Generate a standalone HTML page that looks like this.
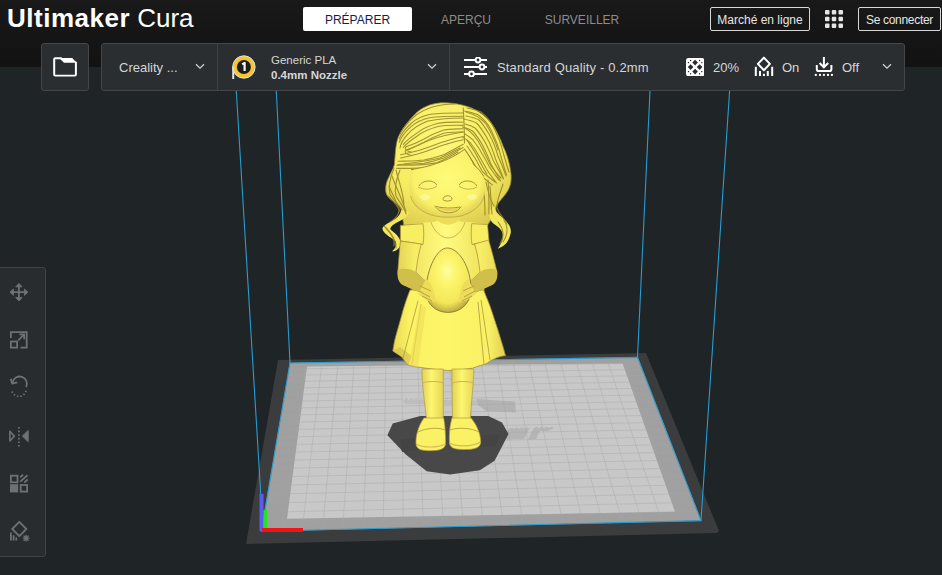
<!DOCTYPE html>
<html><head><meta charset="utf-8">
<style>
*{margin:0;padding:0;box-sizing:border-box}
html,body{width:942px;height:575px;overflow:hidden;background:#1f2427;font-family:"Liberation Sans",sans-serif}
.abs{position:absolute}
#hdr{left:0;top:0;width:942px;height:67px;background:linear-gradient(#191919,#121212)}
#title{left:7px;top:3px;font-size:26px;color:#fff;white-space:nowrap}
#title b{font-weight:bold;letter-spacing:0.5px}
.tab{top:7px;height:24px;font-size:12px;line-height:26px;text-align:center;color:#8c8c8c}
#t1{left:303px;width:109px;background:#fff;color:#1b1b4a;border-radius:2px}
.obtn{top:7px;height:24px;border:1px solid #d8d8d8;border-radius:2px;color:#e6e6e6;font-size:12px;line-height:24px;text-align:center}
.bar{background:#2a2e31;border:1px solid #43474a;border-radius:3px}
.txt{color:#d6d6d6;font-size:13px;white-space:nowrap;margin-top:1px}
.div{width:1px;background:#3d4144}
#ltb{left:-4px;top:267px;width:50px;height:290px;background:#282c2f;border:1px solid #3f4346;border-radius:3px}
</style></head><body>
<svg class="abs" style="left:0;top:0" width="942" height="575" viewBox="0 0 942 575">
 <!-- slab -->
 <polygon points="278,360 646,353 719,531 717,533 246,544" fill="#3a3c3e"/>
 <polygon points="290,363 637.5,357.4 701,520.6 261.4,531.2" fill="#a0a0a0"/>
 <polygon points="307,366.5 622.6,363.5 675,511.7 287,518.7" fill="#c8c8c8"/>
 <path d="M290.0 363.0L261.4 531.2M290.0 363.0L637.5 357.4M306.0 362.7L281.8 530.7M289.0 369.1L639.8 363.3M322.1 362.5L302.1 530.2M287.9 375.3L642.2 369.4M338.1 362.2L322.5 529.7M286.8 381.6L644.6 375.5M354.1 362.0L342.7 529.2M285.7 388.1L647.0 381.8M370.0 361.7L363.0 528.8M284.6 394.6L649.5 388.2M385.9 361.5L383.1 528.3M283.5 401.4L652.0 394.8M401.8 361.2L403.3 527.8M282.3 408.2L654.6 401.4M417.7 360.9L423.4 527.3M281.1 415.2L657.3 408.2M433.6 360.7L443.5 526.8M279.9 422.4L660.0 415.2M449.4 360.4L463.5 526.3M278.7 429.7L662.7 422.3M465.2 360.2L483.5 525.8M277.4 437.1L665.6 429.5M481.0 359.9L503.5 525.4M276.1 444.8L668.4 436.9M496.7 359.7L523.4 524.9M274.8 452.5L671.4 444.5M512.5 359.4L543.3 524.4M273.4 460.5L674.4 452.2M528.2 359.2L563.1 523.9M272.0 468.6L677.4 460.1M543.9 358.9L582.9 523.4M270.6 477.0L680.6 468.1M559.5 358.7L602.7 523.0M269.2 485.5L683.8 476.4M575.2 358.4L622.4 522.5M267.7 494.2L687.1 484.8M590.8 358.2L642.1 522.0M266.2 503.1L690.4 493.5M606.4 357.9L661.8 521.5M264.6 512.3L693.9 502.3M622.0 357.7L681.4 521.1M263.0 521.6L697.4 511.3M637.5 357.4L701.0 520.6M261.4 531.2L701.0 520.6" stroke="#a6a6a6" stroke-width="0.7" fill="none" opacity="0.6"/>
 <polygon points="290,363 637.5,357.4 701,520.6 261.4,531.2" fill="none" stroke="#2a9ccf" stroke-width="1.1"/>
 <!-- volume lines -->
 <path d="M236.3 91L263 531.2M276.3 91L290 363M650 91L637.5 357.4M729.6 91L701 520.6" stroke="#2a9ccf" stroke-width="1.1" fill="none"/>
 <!-- logo -->
 <g opacity="0.6">
  <path d="M403 399.5L476 400.5L478 405L405 404Z" fill="#b6b6b6"/>
  <path d="M403 399L470 399.5" stroke="#dadada" stroke-width="0.8" stroke-dasharray="2 3"/>
  <path d="M476 399L515 401.5L516 412.5L486 411L478 405Z" fill="#a6a6a6"/>
  <path d="M508 428L530 427.5L524 439L505 439.5Z M534 427L556 427L548 431L540 431L536 439L528 439.5Z" fill="#a9a9a9"/>
  <path d="M503 428.5L556 427" stroke="#d4d4d4" stroke-width="0.8" stroke-dasharray="2 3"/>
 </g>
 <!-- shadow -->
 <polygon points="387.4,435.2 392.7,423.5 420.3,416.1 488.3,416.1 502,422.5 508.5,434.1 494.6,460.7 479.8,470.2 450,474.5 426.7,471.3 405.5,454.3" fill="#484848"/>
 <path d="M400 440L430 436L432 448L402 452Z M470 436L500 434L496 446L468 448Z" fill="#444444"/>
 <!-- axes -->
 <rect x="259.5" y="494" width="4" height="37" fill="#5a5cf0"/>
 <rect x="263.5" y="510" width="3.5" height="21" fill="#1ee61e"/>
 <rect x="262" y="528" width="41" height="4" fill="#f01414"/>
 <defs>
 <radialGradient id="gHair" cx="0.45" cy="0.3" r="0.75">
  <stop offset="0" stop-color="#fdf77a"/><stop offset="0.6" stop-color="#f6ec62"/><stop offset="1" stop-color="#d8c64c"/>
 </radialGradient>
 <radialGradient id="gFace" cx="0.5" cy="0.42" r="0.62">
  <stop offset="0" stop-color="#fffb78"/><stop offset="0.72" stop-color="#faf168"/><stop offset="1" stop-color="#dccb52"/>
 </radialGradient>
 <linearGradient id="gSkirt" x1="0" y1="0" x2="1" y2="0">
  <stop offset="0" stop-color="#e9d852"/><stop offset="0.15" stop-color="#fbf264"/><stop offset="0.5" stop-color="#fdf668"/><stop offset="0.85" stop-color="#faf064"/><stop offset="1" stop-color="#e2cf50"/>
 </linearGradient>
 <linearGradient id="gBod" x1="0" y1="0" x2="1" y2="0">
  <stop offset="0" stop-color="#eedf58"/><stop offset="0.5" stop-color="#fffb80"/><stop offset="1" stop-color="#eedf58"/>
 </linearGradient>
 <radialGradient id="gEgg" cx="0.47" cy="0.36" r="0.64">
  <stop offset="0" stop-color="#fffca8"/><stop offset="0.3" stop-color="#fdf66c"/><stop offset="0.78" stop-color="#f4e65a"/><stop offset="1" stop-color="#bfae40"/>
 </radialGradient>
 <linearGradient id="gLeg" x1="0" y1="0" x2="1" y2="0">
  <stop offset="0" stop-color="#e2d154"/><stop offset="0.45" stop-color="#fdf670"/><stop offset="1" stop-color="#e6d558"/>
 </linearGradient>
 <linearGradient id="gArm" x1="0" y1="0" x2="1" y2="0">
  <stop offset="0" stop-color="#e4d356"/><stop offset="0.5" stop-color="#f8ef66"/><stop offset="1" stop-color="#eadb5a"/>
 </linearGradient>
</defs>
<g id="fig" stroke-linejoin="round">
 <!-- hair mass -->
 <path d="M441.3 102.8C430 103.5 421 108 415.2 114.1C409 120 401 130 397.8 138.5C395.5 145 395 158 394.4 164.6C393 170 390 174 389 177C386.5 181 385.5 186 385.7 190C385.7 196 390 199 393.5 201.3C398 205 401.5 208 401.3 211L404 226L424 232L472 232L487 226L492 218L496 212C496 210 495.5 209 496 207C498 202 503 198 507 192C511 186 511.5 180 511 174C510 164 507 154 503 146C500 138 497 132 494 127C488 118 479 110 467.4 106.5C460 104 450 102.5 441.3 102.8Z" fill="url(#gHair)" stroke="#9a8638" stroke-width="0.8"/>
 <path d="M401.3 209C401 215 396 219 390 222C385 225 382 227 382.5 229C383 233 390 237 395 240.5C397 243 397 247 392 251.5C397 251 400 248 400.5 244C401 238 396 234 391 230C389 228 392 225 398 222C404 219 408 216 409 212Z" fill="#f2e75e"/>
 <path d="M494 206C495 211 498 214 503 218C507 222 511 226 510.9 232C509 242 505 246 497.8 248.7C501 244 503 240 503 236C503 231 499 227 494 224C490 221 489 216 489 210Z" fill="#f2e75e"/>
 <!-- hair strands -->
 <g fill="none" stroke="#948426" stroke-width="1.1" opacity="0.85" stroke-linecap="round">
  <path d="M463.2 113C450 113 440 113 430.6 114.3C422 116 416 119 411 123.5C405 129 401 134 399.3 139"/>
  <path d="M463.2 122.2C455 122 445 122 437.2 123.5C428 126 422 129 417.6 132.6C411 137 406 141 403.3 144.3"/>
  <path d="M463.2 128.7C455 129 449 129 443.7 130C435 133 429 136 424.1 139C417 143 410 145 405.9 147C404 149 406 151 411 152"/>
  <path d="M463.2 136.5C455 138 447 141 439.8 143C432 146 424 149 417.6 150.8C410 152.5 404 154 400.6 154.8"/>
  <path d="M463.2 144.3C455 149 449 152 443.7 154.8C437 157 430 159 424.1 160C415 161 405 161 398 161.3"/>
  <path d="M458 152C451 156 444 160 437.2 162.6C428 164.5 418 165 411 165.2C405 165.2 400 165.2 396.7 165.2"/>
  <path d="M463.2 107.8C464 120 464.5 132 464.5 143"/>
  <path d="M467 108C472 109 477 110 481 112C486 116 490 120 493 126C497 134 501 143 503 152C505 159 507 166 509 172"/>
  <path d="M466 116C471 117 475 118 479 120C483 124 486 129 489 134C493 141 496 149 498 156C501 163 504 170 506 176"/>
  <path d="M465 124C469 125 472 126 475 128C479 132 482 137 485 142C488 148 491 154 493 160C496 166 500 172 503 178"/>
  <path d="M465 134C468 136 471 138 473 140C476 144 479 148 481 152C484 157 487 162 489 166C492 171 496 176 499 180"/>
  <path d="M467 146C470 150 472 154 475 158C478 163 480 168 483 172C487 176 491 179 495 182"/>
  <path d="M455 104C440 104 425 108 415 116C408 122 403 128 400 134"/>
  <path d="M463 118C450 118 438 119 428 121C420 124 413 128 408 134C404 138 401 142 400 148"/>
  <path d="M463 132C450 134 438 137 430 140C422 143 414 147 408 150"/>
  <path d="M460 148C452 152 446 155 440 158C432 160 420 162 404 164"/>
  <path d="M466 112C474 114 481 118 486 124C491 132 495 140 498 150"/>
  <path d="M465 128C472 132 478 140 482 148C485 154 488 160 491 166C494 170 497 174 501 178"/>
  <path d="M467 140C470 145 474 150 477 156C480 162 483 168 487 174"/>
  <path d="M488 180C489 192 489 204 489 214"/>
  <path d="M396 170C399 182 403 192 404 204"/>
  <path d="M394 168C390 178 388 186 390 194C393 200 399 204 402 210"/>
  <path d="M400 170C396 180 394 188 396 196C399 202 404 206 406 214"/>
  <path d="M388 196C392 200 397 204 399 210C399 215 395 219 390 222"/>
  <path d="M384 226C390 232 395 238 394 246"/>
  <path d="M486 182C488 192 490 200 494 206"/>
  <path d="M503 184C500 194 496 202 497 208C499 214 504 218 507 224"/>
  <path d="M498 222C503 228 505 236 500 244"/>
  <path d="M483 176C484 190 485 202 485 215"/>
  <path d="M490 186C491 196 491 206 492 214"/>
  <path d="M392 176C396 188 402 198 406 212"/>
  <path d="M389 186C393 196 398 204 400 212"/>
  <path d="M386 228C392 234 396 240 396 248"/>
  <path d="M504 220C508 226 508 234 503 242"/>
  <path d="M 463.2 116.2 C 450.0 116.2 440.0 116.2 430.6 117.5 C 422.0 119.2 416.0 122.2 411.0 126.7 C 405.0 132.2 401.0 137.2 399.3 142.2"/>
  <path d="M 463.2 125.4 C 455.0 125.2 445.0 125.2 437.2 126.7 C 428.0 129.2 422.0 132.2 417.6 135.8 C 411.0 140.2 406.0 144.2 403.3 147.5"/>
  <path d="M 463.2 131.9 C 455.0 132.2 449.0 132.2 443.7 133.2 C 435.0 136.2 429.0 139.2 424.1 142.2 C 417.0 146.2 410.0 148.2 405.9 150.2 C 404.0 152.2 406.0 154.2 411.0 155.2"/>
  <path d="M 463.2 139.7 C 455.0 141.2 447.0 144.2 439.8 146.2 C 432.0 149.2 424.0 152.2 417.6 154.0 C 410.0 155.7 404.0 157.2 400.6 158.0"/>
  <path d="M 463.2 147.5 C 455.0 152.2 449.0 155.2 443.7 158.0 C 437.0 160.2 430.0 162.2 424.1 163.2 C 415.0 164.2 405.0 164.2 398.0 164.5"/>
  <path d="M 458.0 155.2 C 451.0 159.2 444.0 163.2 437.2 165.8 C 428.0 167.7 418.0 168.2 411.0 168.4 C 405.0 168.4 400.0 168.4 396.7 168.4"/>
  <path d="M 464.5 111.0 C 469.5 112.0 474.5 113.0 478.5 115.0 C 483.5 119.0 487.5 123.0 490.5 129.0 C 494.5 137.0 498.5 146.0 500.5 155.0 C 502.5 162.0 504.5 169.0 506.5 175.0"/>
  <path d="M 463.5 119.0 C 468.5 120.0 472.5 121.0 476.5 123.0 C 480.5 127.0 483.5 132.0 486.5 137.0 C 490.5 144.0 493.5 152.0 495.5 159.0 C 498.5 166.0 501.5 173.0 503.5 179.0"/>
  <path d="M 462.5 127.0 C 466.5 128.0 469.5 129.0 472.5 131.0 C 476.5 135.0 479.5 140.0 482.5 145.0 C 485.5 151.0 488.5 157.0 490.5 163.0 C 493.5 169.0 497.5 175.0 500.5 181.0"/>
  <path d="M 462.5 137.0 C 465.5 139.0 468.5 141.0 470.5 143.0 C 473.5 147.0 476.5 151.0 478.5 155.0 C 481.5 160.0 484.5 165.0 486.5 169.0 C 489.5 174.0 493.5 179.0 496.5 183.0"/>
  <path d="M 464.5 149.0 C 467.5 153.0 469.5 157.0 472.5 161.0 C 475.5 166.0 477.5 171.0 480.5 175.0 C 484.5 179.0 488.5 182.0 492.5 185.0"/>
 </g>
 <!-- neck -->
 <path d="M436 210H460V230H436Z" fill="#ecdc58"/>
 <!-- face -->
 <path d="M411.3 169.7C409 178 408.5 188 410.5 196C413 205 420 211 430 214.5C436 216.5 442 217.2 448 217.2C455 217.2 462 216.5 468 213.5C477 209 482.5 203 484.5 195C486 187 485 181 483.2 176C479 170 475 166 472.3 163.5C470 158 467 152 464.5 149.4C455 156 446 161 436.3 163.5C428 166 418 168 411.3 169.7Z" fill="url(#gFace)"/>
 <path d="M411 169.7C420 168 430 166 436.3 163.5C448 160 458 154 464.5 149.4C468 154 472 160 474 165C478 168 481 172 483.5 176" fill="none" stroke="#9b8738" stroke-width="1"/>
 <path d="M410.5 196C413 205 420 211 430 214.5C436 216.5 442 217.2 448 217.2C455 217.2 462 216.5 468 213.5C477 209 482.5 203 484.5 195" fill="none" stroke="#a8923c" stroke-width="0.8" opacity="0.7"/>
 <!-- face features -->
 <g fill="none" stroke="#a8933e" stroke-width="1">
  <path d="M419 186C422 180 433 179 437 185"/>
  <path d="M418 187C424 190 432 190 437 186" stroke="#c8b350"/>
  <path d="M459 185C463 179 474 180 477 186"/>
  <path d="M459 186C464 190 472 190 477 187" stroke="#c8b350"/>
  <path d="M443 199.5C443 194.5 452.5 194.5 452 199.5C450.5 201.5 444.5 201.5 443 199.5Z"/>
  <path d="M434.7 205.7C440 215 456 215 461.3 206.5"/>
  <path d="M436 206.5C444 208.5 452 208.5 460 207"/>
 </g>
 <path d="M437 207.5C444 209 452 209 459 208C456 212 440 212 437 207.5Z" fill="#e4d150"/>
 <ellipse cx="425" cy="197" rx="5" ry="3" fill="#fffcb0" opacity="0.6"/>
 <ellipse cx="472" cy="197" rx="5" ry="3" fill="#fffcb0" opacity="0.6"/>
 <!-- bodice -->
 <path d="M404 226C415 223 430 222 438 221C444 226 452 226 458 221C468 222 480 223 487.5 224.5L486 250L484 296L412 296L410 250Z" fill="url(#gBod)"/>
 <path d="M431 222C434 232 442 238 448 238C455 238 462 232 465 222" fill="none" stroke="#c3ad4c" stroke-width="0.9"/>
 <!-- sleeves -->
 <path d="M400.4 225.4L423 223.7C424 230 424 238 423 244.6L400.4 241Z" fill="#f8ee62" stroke="#a08c3a" stroke-width="0.7"/>
 <path d="M471.7 223.7L487.5 224.5L489 241L472 244.6C471 238 471 230 471.7 223.7Z" fill="#f8ee62" stroke="#a08c3a" stroke-width="0.7"/>
 <path d="M401 241L423 244.6M472 244.6L489 241" stroke="#b8a246" stroke-width="0.8" fill="none"/>
 <!-- skirt -->
 <path d="M410 290C406 300 403 310 402.2 313.5C399 325 396 335 394.4 341.6L392.8 351C396 353 399 355 402.2 357.3C404 360 406 363 408.5 365C416 367 424 368 432 369C440 370 446 370.6 452.3 370.6C460 370 466 369 472.6 368.2C478 366 483 365 486.7 363.5C490 361 492 360 494.5 358.8C498 357 502 356 505.5 355.7C503 346 500 337 497.6 329C494 318 490 305 486.7 297.8L483.6 290Z" fill="url(#gSkirt)" stroke="#a08c3a" stroke-width="0.8"/>
 <path d="M393 351C396 353 399 355 402 357C404 360 406 363 408.5 365L412 356L400 347Z" fill="#d4c24c" opacity="0.7"/>
 <!-- skirt folds -->
 <path d="M418 301L403 358M421 304L412 364M478 302L484 364M481 300L490 360" fill="none" stroke="#a9953e" stroke-width="0.9" opacity="0.85"/>
 <path d="M420 304L409 365L418 367L426 308Z" fill="#efe058" opacity="0.7"/>
 <!-- arms -->
 <path d="M400.4 241C399.5 250 398.5 262 397.8 272C397.5 277 398.5 281 401.5 284C405 286 410 288 419.6 292C424 295 428 299 432 302L434 294C432 290 430 286 428 283C424 280 420 276 416 272C417 262 419 252 421.3 244Z" fill="url(#gArm)" stroke="#a08c3a" stroke-width="0.7"/>
 <path d="M488.6 240C491 248 494.3 260 497 272C497.5 277 496.5 281 493.5 284C490 286 485 288 476 292C472 295 468 299 464 302L462 294C464 290 466 286 468 283C472 280 476 276 480 272C479 262 477 252 474.5 244Z" fill="url(#gArm)" stroke="#a08c3a" stroke-width="0.7"/>
 <path d="M397.8 270C402 268 410 268 416 272C420 276 424 280 428 283C430 286 432 290 434 294L432 302C428 299 424 295 419.6 292C410 288 405 286 401.5 284C398.5 281 397.5 277 397.8 270Z" fill="#d0bf4a"/>
 <path d="M497 270C493 268 485 268 480 272C476 276 472 280 468 283C466 286 464 290 462 294L464 302C468 299 472 295 476 292C485 288 490 286 493.5 284C496.5 281 497.5 277 497 270Z" fill="#d0bf4a"/>
 <!-- egg -->
 <path d="M447.4 248C437 248 427 268 426 290C425.5 303 435 312.4 448 312.4C461 312.4 471 303 471 289C471 268 459 248 447.4 248Z" fill="url(#gEgg)" stroke="#8a7734" stroke-width="0.9"/>
 <!-- hands -->
 <path d="M426 279C431 282 433 288 434 294L436 302L428 301L418 294Z" fill="#ecdc58"/>
 <path d="M468 279C463 282 461 288 460 294L458 302L466 301L476 294Z" fill="#ecdc58"/>
 <path d="M420 286L431 291M419 291L430 297M422 296L432 301M474 286L463 291M475 291L464 297M472 296L462 301" stroke="#a8923c" stroke-width="0.8" fill="none"/>
 <!-- legs -->
 <path d="M421.9 369H443.3L443.3 418C437 420 430 420 426.4 418C425 405 422 385 421.9 369Z" fill="url(#gLeg)" stroke="#b09a42" stroke-width="0.7"/>
 <path d="M451.9 369H473.9C473.5 385 471 405 470.5 418C466 420 458 420 452.4 418Z" fill="url(#gLeg)" stroke="#b09a42" stroke-width="0.7"/>
 <path d="M422 383C428 381 438 381 443.3 383M452 383C458 381 468 381 473.9 383" stroke="#c4ae4e" stroke-width="0.9" fill="none"/>
 <!-- shoes -->
 <path d="M424 418C418 426 415 438 416.2 445C417 450 423 450.7 431 450.7C440 450.7 445.6 449 445.6 443C445.6 434 445 424 443.6 418Z" fill="#faf164" stroke="#b09a42" stroke-width="0.7"/>
 <path d="M452 418C449.5 426 449 436 449.5 443C450 449 457 449.5 465 449.5C474 449.5 480.7 448 480.7 442C480.7 433 476 424 471 418Z" fill="#faf164" stroke="#b09a42" stroke-width="0.7"/>
 <path d="M418 432C426 428 438 427 445 430M450 430C458 427 472 428 479 432" stroke="#b49f44" stroke-width="0.9" fill="none"/>
 <path d="M416.5 444C422 448 438 448 445.5 444M449.5 443C456 447 472 447 480.7 442" stroke="#d3bc54" stroke-width="1.2" fill="none"/>
</g>

</svg>
<div id="hdr" class="abs"></div>
<div id="title" class="abs"><b>Ultimaker</b> Cura</div>
<div id="t1" class="abs tab">PRÉPARER</div>
<div class="abs tab" style="left:430px;width:72px">APERÇU</div>
<div class="abs tab" style="left:540px;width:84px">SURVEILLER</div>
<div class="abs obtn" style="left:710px;width:100px">Marché en ligne</div>
<svg class="abs" style="left:825px;top:10px" width="18" height="18" viewBox="0 0 18 18" fill="#e6e6e6">
 <rect x="0" y="0" width="4.5" height="4.5" rx="1"/><rect x="6.75" y="0" width="4.5" height="4.5" rx="1"/><rect x="13.5" y="0" width="4.5" height="4.5" rx="1"/>
 <rect x="0" y="6.75" width="4.5" height="4.5" rx="1"/><rect x="6.75" y="6.75" width="4.5" height="4.5" rx="1"/><rect x="13.5" y="6.75" width="4.5" height="4.5" rx="1"/>
 <rect x="0" y="13.5" width="4.5" height="4.5" rx="1"/><rect x="6.75" y="13.5" width="4.5" height="4.5" rx="1"/><rect x="13.5" y="13.5" width="4.5" height="4.5" rx="1"/>
</svg>
<div class="abs obtn" style="left:858px;width:83px;letter-spacing:-0.3px">Se connecter</div>

<div class="abs bar" style="left:41px;top:43px;width:48px;height:48px"></div>
<svg class="abs" style="left:50px;top:54px" width="30" height="26" viewBox="0 0 30 26">
 <path fill="#fff" fill-rule="evenodd" d="M5.2 3.2H11.3L12.3 4.1H22.2L24.7 6.8L26.9 8.1V20.6Q26.9 22.6 24.9 22.6H5.2Q3.2 22.6 3.2 20.6V5.2Q3.2 3.2 5.2 3.2Z M5.2 5.2H10.4L14 8.8H24.9V20.8H5.2Z"/>
</svg>

<div class="abs bar" style="left:101px;top:43px;width:804px;height:48px"></div>
<div class="abs div" style="left:217px;top:44px;height:46px"></div>
<div class="abs div" style="left:449px;top:44px;height:46px"></div>
<div class="abs txt" style="left:119px;top:59px">Creality ...</div>
<svg class="abs" style="left:195px;top:63px" width="10" height="7" viewBox="0 0 10 7"><path d="M1 1.2L5 5.2L9 1.2" stroke="#cfcfcf" stroke-width="1.3" fill="none"/></svg>
<svg class="abs" style="left:226px;top:50px" width="36" height="34" viewBox="0 0 36 34">
 <circle cx="17.9" cy="17" r="11.2" fill="#f3c52f" stroke="#e2e2e2" stroke-width="1"/>
 <circle cx="17.9" cy="17" r="7" fill="#1c1c1c"/>
 <path d="M7.2 17V29" stroke="#e2e2e2" stroke-width="2"/>
 <path d="M16.2 14.4L18.6 12.8V21" stroke="#f4f4f4" stroke-width="2.2" fill="none" stroke-linejoin="round"/>
</svg>
<div class="abs txt" style="left:271px;top:53px;font-size:11.5px">Generic PLA</div>
<div class="abs txt" style="left:271px;top:68px;font-size:11.5px;font-weight:bold">0.4mm Nozzle</div>
<svg class="abs" style="left:427px;top:63px" width="10" height="7" viewBox="0 0 10 7"><path d="M1 1.2L5 5.2L9 1.2" stroke="#cfcfcf" stroke-width="1.3" fill="none"/></svg>
<svg class="abs" style="left:463px;top:57px" width="26" height="20" viewBox="0 0 26 20" stroke="#fff" stroke-width="2" fill="#2a2e31">
 <path d="M1 3H24M1 10H24M1 17H24"/>
 <circle cx="15" cy="3" r="2.4"/><circle cx="19" cy="10" r="2.4"/><circle cx="8.5" cy="17" r="2.4"/>
</svg>
<div class="abs txt" style="left:497px;top:59px;letter-spacing:0.15px">Standard Quality - 0.2mm</div>
<svg class="abs" style="left:685.8px;top:57.8px" width="18.4" height="18.4" viewBox="0 0 18.4 18.4">
 <rect x="0" y="0" width="18.4" height="18.4" rx="2.6" fill="#fff"/>
 <g fill="#2a2e31"><path d="M9.1 1.7999999999999998L11.899999999999999 4.6L9.1 7.3999999999999995L6.3 4.6ZM4.6 6.3L7.3999999999999995 9.1L4.6 11.899999999999999L1.7999999999999998 9.1ZM13.6 6.3L16.4 9.1L13.6 11.899999999999999L10.8 9.1ZM9.1 10.8L11.899999999999999 13.6L9.1 16.4L6.3 13.6Z"/><rect x="4.0" y="1.9" width="1.2" height="1.2"/><rect x="13.0" y="1.9" width="1.2" height="1.2"/><rect x="1.9" y="4.0" width="1.2" height="1.2"/><rect x="15.2" y="4.0" width="1.2" height="1.2"/><rect x="1.9" y="13.0" width="1.2" height="1.2"/><rect x="15.2" y="13.0" width="1.2" height="1.2"/><rect x="4.0" y="15.2" width="1.2" height="1.2"/><rect x="13.0" y="15.2" width="1.2" height="1.2"/></g>
</svg>
<div class="abs txt" style="left:713px;top:59px">20%</div>
<svg class="abs" style="left:750px;top:52px" width="28" height="28" viewBox="0 0 28 28" fill="none" stroke="#fff" stroke-width="2">
 <path d="M13.9 5.6L19.9 11.9L13.9 18.2L7.9 11.9Z" stroke-linejoin="round"/>
 <path d="M5.8 14.8V24M10 19V24M13.9 21.7V24M17.8 19V24M22.2 14.8V24"/>
</svg>
<div class="abs txt" style="left:782px;top:59px">On</div>
<svg class="abs" style="left:810px;top:52px" width="28" height="28" viewBox="0 0 28 28" fill="none" stroke="#fff" stroke-width="2">
 <path d="M13.9 4.9V15.2M9.6 11L13.9 15.3L18.2 11"/>
 <path d="M6.8 12.9V17.2Q6.8 19 8.6 19H19.6Q21.4 19 21.4 17.2V12.9"/>
 <g fill="#fff" stroke="none"><rect x="4.8" y="21.9" width="2" height="2"/><rect x="9" y="21.9" width="2" height="2"/><rect x="12.9" y="21.9" width="2" height="2"/><rect x="17" y="21.9" width="2" height="2"/><rect x="20.9" y="21.9" width="2" height="2"/></g>
</svg>
<div class="abs txt" style="left:842px;top:59px">Off</div>
<svg class="abs" style="left:882px;top:63px" width="10" height="7" viewBox="0 0 10 7"><path d="M1 1.2L5 5.2L9 1.2" stroke="#cfcfcf" stroke-width="1.3" fill="none"/></svg>

<div id="ltb" class="abs"></div>
<svg class="abs" style="left:0;top:267px" width="46" height="290" viewBox="0 267 46 290" fill="none" stroke="#6e7072" stroke-width="1.8">
 <!-- move -->
 <path d="M18.9 284V300.5M10.5 292.2H27.5"/>
 <path d="M15.8 286.8L18.9 283.4L22 286.8Z M15.8 297.6L18.9 301L22 297.6Z M13.4 289.1L10 292.2L13.4 295.3Z M24.4 289.1L27.8 292.2L24.4 295.3Z" fill="#6e7072" stroke-width="1" stroke-linejoin="round"/>
 <!-- scale -->
 <path d="M10.9 338V332.2H26.7V347.6H20.5"/>
 <rect x="10.9" y="341.5" width="6.2" height="6.1"/>
 <path d="M18.2 340.3L24.2 334.4M19.4 334.4H24.2V339.2"/>
 <!-- rotate -->
 <path d="M12.6 382.5A7.2 7.2 0 1 1 26.1 387" />
 <path d="M10.6 378.8L12.3 383.6L17.2 382.3" stroke-linejoin="round"/>
 <path d="M26 390.8A7.2 7.2 0 0 1 11.8 390" stroke-dasharray="1.4 2"/>
 <!-- mirror -->
 <path d="M9.9 431.2L14.3 436.1L9.9 441Z" stroke-linejoin="round" stroke-width="1.6"/>
 <path d="M28.2 430.5L22.3 436.1L28.2 441.7Z" fill="#6e7072" stroke-width="1" stroke-linejoin="round"/>
 <path d="M18.9 427V447" stroke-dasharray="1.6 2"/>
 <!-- per model -->
 <rect x="10.9" y="475.7" width="6.6" height="6.6"/>
 <rect x="20.7" y="485" width="6.4" height="6.6"/>
 <rect x="10" y="484.2" width="8.2" height="8.2" fill="#6e7072" stroke="none"/>
 <path d="M20.2 477.2L23.2 474.6M20.2 481.6L27.5 475.2M24.2 482.6L27.8 479.5" stroke-width="1.8"/>
 <!-- support blocker -->
 <path d="M19.3 521.8L26.4 529L19.3 536.2L12.2 529Z" stroke-linejoin="round"/>
 <path d="M10.9 532.5V540.5M13.6 535.2V540.5M16.3 537.5V540.5"/>
 <path d="M23.6 535.6L28.6 540.8M28.6 535.6L23.6 540.8M26.1 534.8V541.6M22.8 538.2H29.4" stroke-width="1.3"/>
</svg>
</body></html>
